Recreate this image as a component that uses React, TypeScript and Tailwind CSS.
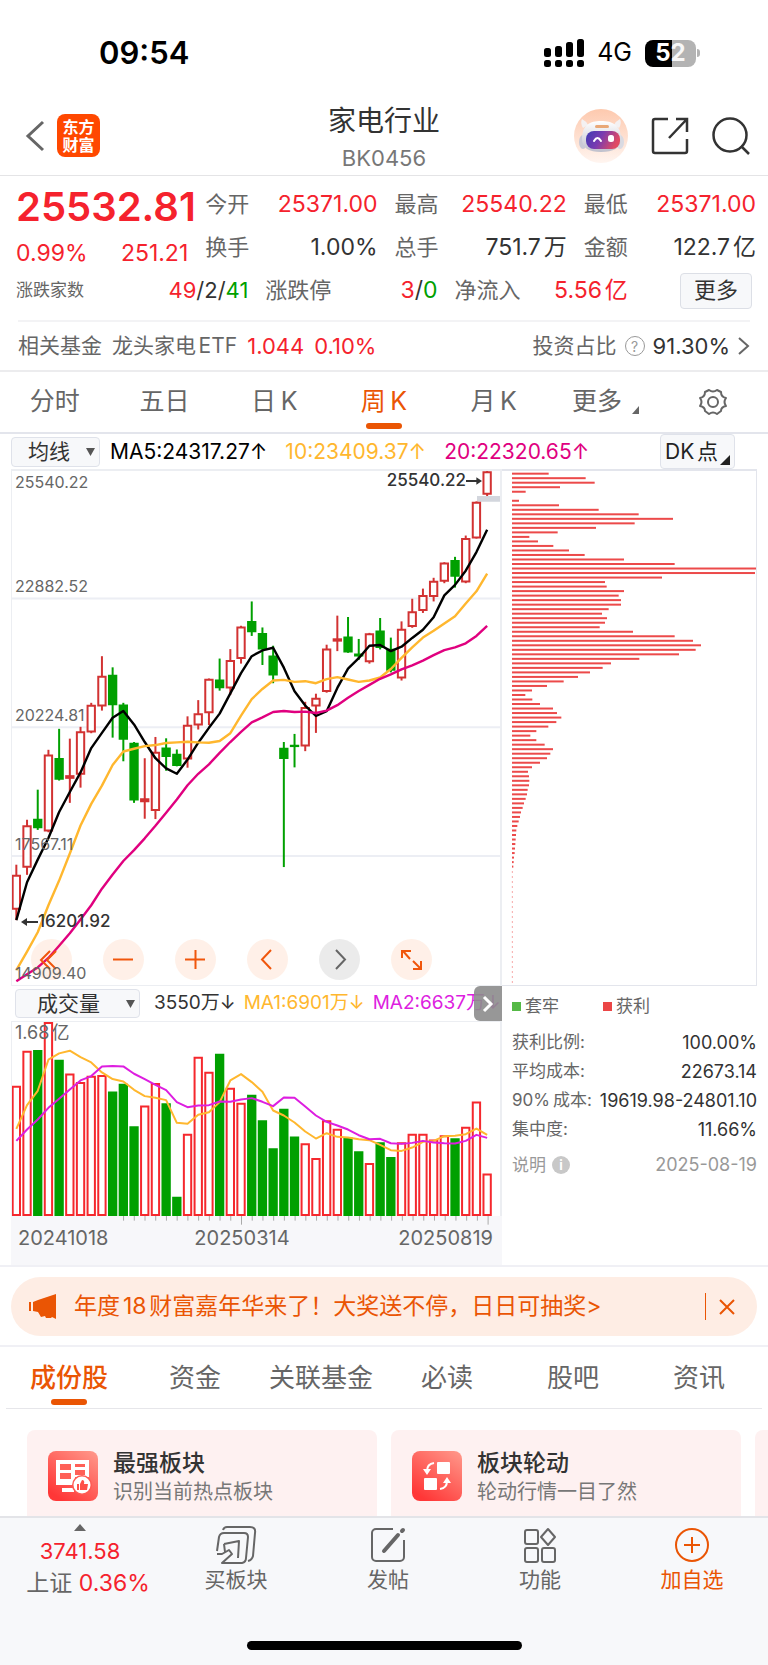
import React from 'react'

const RED = '#d23232'
const GREEN = '#00a000'

// [high, body top, body bottom, low, rising]
const candles: number[][] = [
  [1183, 1214, 1315, 1347, 1], [1050, 1067, 1191, 1213, 1], [961, 1048, 1074, 1080, 0],
  [843, 858, 1084, 1087, 1], [781, 868, 931, 934, 0], [810, 919, 928, 1000, 1],
  [775, 789, 916, 955, 1], [704, 711, 791, 794, 1], [566, 625, 714, 727, 1],
  [599, 622, 710, 807, 0], [704, 710, 812, 877, 0], [820, 823, 992, 1000, 0],
  [868, 987, 997, 1047, 1], [805, 850, 1023, 1048, 1], [809, 837, 863, 905, 0],
  [842, 856, 890, 892, 0], [744, 770, 871, 896, 1], [696, 736, 770, 783, 1],
  [632, 634, 734, 770, 1], [573, 636, 660, 668, 0], [545, 578, 661, 681, 1],
  [476, 479, 573, 588, 1], [404, 463, 494, 506, 0], [481, 498, 545, 592, 0],
  [535, 565, 622, 646, 0], [820, 838, 869, 1190, 0], [796, 829, 833, 895, 0],
  [701, 717, 832, 847, 1], [677, 690, 714, 793, 1], [532, 544, 671, 674, 1],
  [446, 514, 522, 551, 1], [450, 509, 554, 556, 0], [515, 559, 566, 577, 0],
  [497, 499, 583, 588, 1], [453, 491, 541, 546, 0], [511, 545, 608, 614, 0],
  [463, 486, 631, 638, 1], [396, 434, 479, 482, 1], [366, 386, 431, 438, 1],
  [334, 344, 390, 404, 1], [288, 290, 345, 350, 1], [272, 282, 330, 363, 0],
  [209, 217, 347, 350, 1], [108, 110, 217, 218, 1], [18, 20, 87, 92, 1],
]

const ma5 = [1347, 1235, 1168, 1104, 1027, 968, 910, 838, 793, 748, 728, 768, 820, 868, 898, 914, 872, 822, 778, 736, 676, 616, 566, 549, 541, 600, 670, 712, 743, 729, 660, 603, 572, 535, 533, 551, 538, 512, 488, 451, 386, 355, 313, 258, 192]
const ma10 = [1495, 1440, 1383, 1303, 1230, 1150, 1067, 1003, 949, 888, 848, 840, 832, 829, 823, 821, 819, 821, 822, 817, 794, 742, 693, 663, 638, 636, 642, 640, 646, 634, 628, 635, 642, 638, 629, 604, 571, 540, 511, 491, 469, 448, 410, 374, 322]
const ma20 = [1528, 1507, 1487, 1459, 1423, 1386, 1345, 1303, 1254, 1212, 1172, 1140, 1105, 1068, 1029, 990, 948, 914, 886, 852, 820, 790, 762, 747, 731, 728, 731, 730, 734, 727, 711, 689, 669, 651, 633, 620, 605, 593, 579, 563, 548, 540, 528, 506, 476]

const volumes = [318, 213, 211, 127, 240, 281, 307, 288, 286, 335, 312, 439, 377, 310, 370, 650, 462, 231, 276, 222, 324, 369, 345, 421, 505, 387, 470, 490, 534, 421, 447, 473, 514, 549, 487, 531, 487, 462, 462, 479, 466, 475, 441, 365, 581]
const vol1 = [447, 376, 333, 240, 221, 213, 232, 248, 278, 298, 305, 330, 349, 354, 361, 429, 432, 405, 397, 367, 302, 283, 307, 336, 392, 407, 428, 455, 476, 460, 471, 473, 478, 481, 495, 511, 513, 503, 486, 483, 469, 468, 463, 446, 465]
const vol2 = [483, 449, 419, 384, 357, 329, 302, 289, 260, 259, 260, 282, 298, 315, 331, 367, 382, 377, 376, 365, 366, 359, 355, 366, 379, 353, 354, 380, 407, 426, 437, 449, 466, 478, 477, 490, 492, 489, 483, 488, 490, 491, 483, 465, 474]

const chips = [110, 221, 248, 144, 41, 0, 21, 141, 260, 380, 483, 368, 252, 137, 52, 78, 124, 171, 218, 336, 488, 734, 729, 450, 279, 284, 336, 320, 327, 327, 290, 270, 285, 279, 263, 363, 488, 543, 567, 551, 501, 382, 297, 272, 234, 198, 155, 105, 60, 40, 61, 84, 123, 135, 148, 133, 109, 73, 55, 73, 98, 123, 115, 105, 84, 60, 48, 51, 52, 51, 47, 45, 41, 36, 32, 27, 24, 20, 16, 13, 12, 11, 10, 9, 8, 6, 5, 4]

const cx = (i: number) => 49 + i * 32.1
const line = (ys: number[]) => ys.map((y, i) => `${cx(i)},${y}`).join(' ')

function Line({ ys, color, width = 2 }: { ys: number[]; color: string; width?: number }) {
  return <polyline points={line(ys)} fill="none" stroke={color} strokeWidth={width} strokeLinejoin="round" vectorEffect="non-scaling-stroke" />
}

function StatusBar() {
  return (
    <div className="flex h-24 items-center justify-between pt-[10px] pr-[68px] pl-[99px] text-black">
      <span className="text-[31px] font-semibold">09:54</span>
      <div className="flex items-center gap-[13px]">
        <svg width="40" height="28" viewBox="0 0 40 28">
          <rect x="0" y="9" width="7" height="9" rx="2.5" />
          <rect x="11" y="7" width="7" height="11" rx="2.5" />
          <rect x="22" y="3" width="7" height="15" rx="2.5" />
          <rect x="33" y="0" width="7" height="18" rx="2.5" />
          <rect x="0" y="21" width="7" height="7" rx="2.5" />
          <rect x="11" y="21" width="7" height="7" rx="2.5" />
          <rect x="22" y="21" width="7" height="7" rx="2.5" />
          <rect x="33" y="21" width="7" height="7" rx="2.5" />
        </svg>
        <span className="text-[25px]">4G</span>
        <div className="flex items-center gap-px">
          <div className="flex h-[27px] w-[51px] items-center justify-center rounded-lg bg-[linear-gradient(90deg,#000_52%,#b3b3b3_52%)] text-[24px] font-bold text-white">
            <span>5</span>
            <span className="text-white/90">2</span>
          </div>
          <div className="h-2 w-[3px] rounded-r-full bg-[#b3b3b3]" />
        </div>
      </div>
    </div>
  )
}

function Robot() {
  return (
    <svg width="54" height="54" viewBox="0 0 54 54">
      <defs>
        <linearGradient id="halo" x1="0" y1="0" x2="0" y2="1">
          <stop offset="0" stopColor="#fdc9ae" />
          <stop offset="1" stopColor="#fff5f0" />
        </linearGradient>
        <linearGradient id="visor" x1="0" y1="0" x2="1" y2="0.3">
          <stop offset="0" stopColor="#3e3bb4" />
          <stop offset="0.5" stopColor="#7a3bb0" />
          <stop offset="1" stopColor="#e04a63" />
        </linearGradient>
        <linearGradient id="shell" x1="0" y1="0" x2="0" y2="1">
          <stop offset="0" stopColor="#ffffff" />
          <stop offset="1" stopColor="#bfc0cc" />
        </linearGradient>
      </defs>
      <circle cx="27" cy="27" r="27" fill="url(#halo)" />
      <ellipse cx="9" cy="33" rx="4" ry="7" fill="#c9cad6" />
      <ellipse cx="46" cy="33" rx="4" ry="7" fill="#d9dae2" />
      <path d="M8 10q4 2 6 6l-5 3q-3-5-1-9zM46 10q-4 2-6 6l5 3q3-5 1-9z" fill="#f4f1f2" />
      <path d="M8 30C8 16 16 12 27 12s20 4 20 18c0 9-8 13-20 13S8 39 8 30z" fill="url(#shell)" />
      <rect x="21" y="16" width="14" height="3" rx="1.5" fill="#e9a877" />
      <rect x="12" y="22" width="34" height="18" rx="8" fill="url(#visor)" />
      <path d="M20 32q3.500-6 7 0" fill="none" stroke="#fff" strokeWidth="2" strokeLinecap="round" />
      <rect x="34" y="26" width="6" height="7" rx="2.500" fill="#fff" />
    </svg>
  )
}

function Header() {
  return (
    <header className="grid h-20 grid-cols-[1fr_auto_1fr] items-center border-b border-[#e4e4e6] px-[18px]">
      <div className="flex items-center gap-3 pl-[7px]">
        <button aria-label="返回">
          <svg width="20" height="32" viewBox="0 0 20 32" fill="none" stroke="#666" strokeWidth="3">
            <path d="M18 2 3 16l15 14" />
          </svg>
        </button>
        <a href="#home" className="flex h-[43px] w-[43px] flex-col items-center justify-center rounded-lg bg-[#ff4800] text-[16px] leading-[18px] font-bold text-white">
          <span>东方</span>
          <span>财富</span>
        </a>
      </div>
      <div className="flex flex-col items-center gap-1 pt-[6px]">
        <h1 className="text-[28px] leading-[34px] text-[#333]">家电行业</h1>
        <span className="text-[22px] leading-8 text-[#777]">BK0456</span>
      </div>
      <div className="flex items-center justify-end gap-[23px]">
        <button aria-label="助手"><Robot /></button>
        <button aria-label="分享">
          <svg width="38" height="38" viewBox="0 0 38 38" fill="none" stroke="#333" strokeWidth="2.500">
            <path d="M17 2H4a2 2 0 0 0-2 2v30a2 2 0 0 0 2 2h30a2 2 0 0 0 2-2V22M25 2h11v13M36 2 18 21" />
          </svg>
        </button>
        <button aria-label="搜索">
          <svg width="38" height="38" viewBox="0 0 38 38" fill="none" stroke="#333" strokeWidth="2.500">
            <circle cx="18" cy="18" r="16.500" />
            <path d="m29 29 8 8" />
          </svg>
        </button>
      </div>
    </header>
  )
}

function Stat({ label, value, red }: { label: string; value: React.ReactNode; red?: boolean }) {
  return (
    <div className="flex items-center justify-between whitespace-nowrap">
      <span className="text-[#666]">{label}</span>
      <span className={red ? 'text-[23px] text-[#f5222d]' : 'text-[23px] text-[#333]'}>{value}</span>
    </div>
  )
}

function Quote() {
  return (
    <section className="border-b-2 border-[#ececee] pt-[7px] text-[22px]">
      <div className="grid grid-cols-4 grid-rows-[43px_43px] gap-x-[17px] pr-3 pl-4">
        <div className="row-span-2 text-[#f5222d]">
          <div className="text-[40px] leading-[48px] font-semibold whitespace-nowrap">25532.81</div>
          <div className="flex justify-between text-[23px] leading-[44px]">
            <span>0.99%</span>
            <span>251.21</span>
          </div>
        </div>
        <Stat label="今开" value="25371.00" red />
        <Stat label="最高" value="25540.22" red />
        <Stat label="最低" value="25371.00" red />
        <Stat label="换手" value="1.00%" />
        <Stat label="总手" value="751.7万" />
        <Stat label="金额" value="122.7亿" />
      </div>
      <div className="grid h-[43px] grid-cols-[232fr_172fr_173fr_111fr] items-center gap-x-[17px] pr-3 pl-4">
        <div className="flex items-center justify-between">
          <span className="text-[17px] text-[#666]">涨跌家数</span>
          <span className="text-[#333]">
            <span className="text-[#f5222d]">49</span>/2/<span className="text-[#00a000]">41</span>
          </span>
        </div>
        <Stat label="涨跌停" value={<><span className="text-[#f5222d]">3</span>/<span className="text-[#00a000]">0</span></>} />
        <Stat label="净流入" value="5.56亿" red />
        <button className="mr-1 h-9 w-[72px] justify-self-end rounded border border-[#dcdfe6] bg-[#f7f8fa] text-[#333]">更多</button>
      </div>
      <div className="mx-[18px] mt-2 flex h-[50px] items-center justify-between border-t-2 border-[#f3f3f5] text-[21px] text-[#666]">
        <a href="#etf" className="flex items-center gap-[10px]">
          <span>相关基金</span>
          <span>龙头家电ETF</span>
          <span className="text-[22px] text-[#f5222d]">1.044</span>
          <span className="text-[22px] text-[#f5222d]">0.10%</span>
        </a>
        <a href="#ratio" className="flex items-center gap-2">
          <span>投资占比</span>
          <span className="flex h-5 w-5 items-center justify-center rounded-full border border-[#999] text-[14px] text-[#999]">?</span>
          <span className="text-[22px] text-[#333]">91.30%</span>
          <svg width="12" height="20" viewBox="0 0 12 20" fill="none" stroke="#666" strokeWidth="2">
            <path d="m1 2 9 8-9 8" />
          </svg>
        </a>
      </div>
    </section>
  )
}

function PeriodTabs() {
  const tabs = ['分时', '五日', '日K', '周K', '月K']
  return (
    <nav className="grid h-[62px] grid-cols-7 border-b-2 border-[#e3e5ec] text-[25px] text-[#666]">
      {tabs.map((t) => (
        <button key={t} className={t === '周K' ? 'relative text-[#ea5504]' : 'relative'}>
          {t.replace('K', '\u2009K')}
          {t === '周K' && <span className="absolute bottom-[3px] left-1/2 h-[6px] w-9 -translate-x-1/2 rounded-full bg-[#ea5504]" />}
        </button>
      ))}
      <button className="flex items-center justify-center gap-[10px] pl-1">
        更多
        <svg width="7" height="8" viewBox="0 0 7 8" fill="#666" className="mt-4"><path d="M7 0v8H0z" /></svg>
      </button>
      <button aria-label="设置" className="flex items-center justify-center">
        <svg width="30" height="28" viewBox="0 0 30 28" fill="none" stroke="#666" strokeWidth="2">
          <path d="M11 2q4 3 8 0l4 2q0 5 5 6q-3 4 0 8q-5 1-5 5l-4 3q-4-3-8 0l-4-3q0-4-5-5q3-4 0-8q5-1 5-6z" strokeLinejoin="round" />
          <circle cx="15" cy="14" r="5" />
        </svg>
      </button>
    </nav>
  )
}

function Toolbar() {
  return (
    <div className="flex h-[35px] items-center justify-between pr-[33px] pl-[11px] text-[21px] whitespace-nowrap">
      <div className="flex items-center">
        <button className="flex h-[30px] w-[89px] items-center justify-end gap-4 rounded border border-[#dfe2ea] bg-[#f7f8fa] pr-1 text-[#333]">
          均线
          <svg width="9" height="8" viewBox="0 0 9 8" fill="#555"><path d="M0 0h9L4.500 8z" /></svg>
        </button>
        <span className="ml-[10px] text-black">MA5:24317.27↑</span>
        <span className="ml-[18px] text-[#ffb72e]">10:23409.37↑</span>
        <span className="ml-[18px] text-[#e0007f]">20:22320.65↑</span>
      </div>
      <button className="relative flex h-[35px] w-[75px] items-center rounded border border-[#dfe2ea] bg-[#f7f8fa] pl-1 text-[#222]">
        DK点
        <svg width="10" height="10" viewBox="0 0 10 10" fill="#222" className="absolute right-1 bottom-[3px]"><path d="M10 0v10H0z" /></svg>
      </button>
    </div>
  )
}

const zoomButtons = [
  ['最早', 'M19 12l-9 9 9 9M25 12l-9 9 9 9'],
  ['缩小', 'M10 20.500h20'],
  ['放大', 'M10 20.500h20M20.500 11v19'],
  ['左移', 'M24 11l-9 9.500 9 9.500'],
  ['右移', 'M17 11l9 9.500-9 9.500'],
  ['全屏', 'M11 19v-7h9M12 12l7 8M22 30h8v-8M30 30l-8-8'],
]

function KLine() {
  return (
    <div className="relative h-[517px] border-t-2 border-r-2 border-b border-l border-[#eceef2] text-[16px] text-[#666]">
      <svg className="absolute inset-0 h-full w-full" viewBox="36 18 1464 1521" preserveAspectRatio="none">
        {[395, 776, 1157].map((y) => (
          <path key={y} d={`M33 ${y}H1503`} stroke="#eceef4" strokeWidth="2" vectorEffect="non-scaling-stroke" />
        ))}
        <rect x="1431" y="92" width="72" height="17" fill="#d3d6dd" />
        {candles.map(([hi, top, bot, lo, up], i) => (
          <g key={i} stroke={up ? RED : GREEN} fill={up ? '#fff' : GREEN}>
            <path d={`M${cx(i)} ${hi}V${lo}`} strokeWidth="2" vectorEffect="non-scaling-stroke" />
            <rect x={cx(i) - 11} y={top + 2} width="22" height={Math.max(bot - top - 4, 1)} strokeWidth="2" vectorEffect="non-scaling-stroke" />
          </g>
        ))}
        <Line ys={ma5} color="#000" width={2.4} />
        <Line ys={ma10} color="#ffb72e" width={2.4} />
        <Line ys={ma20} color="#e0007f" width={2.4} />
      </svg>
      <div className="absolute bottom-[5px] left-[19px] flex gap-[31px]">
        {zoomButtons.map(([label, d]) => (
          <button
            key={label}
            aria-label={label}
            className={label === '右移' ? 'rounded-full bg-black/8 text-[#666]' : 'rounded-full bg-[#ff5a00]/9 text-[#f0560c]'}
          >
            <svg width="41" height="41" viewBox="0 0 41 41" fill="none" stroke="currentColor" strokeWidth="2"><path d={d} /></svg>
          </button>
        ))}
      </div>
      <span className="absolute top-[-1px] left-[3px]">25540.22</span>
      <span className="absolute top-[103px] left-[3px]">22882.52</span>
      <span className="absolute top-[232px] left-[3px]">20224.81</span>
      <span className="absolute top-[361px] left-[3px]">17567.11</span>
      <span className="absolute bottom-0 left-[3px]">14909.40</span>
      <span className="absolute top-[438px] left-[9px] flex items-center text-[17px] font-medium text-[#333]">
        <svg width="17" height="8" viewBox="0 0 17 8" fill="#333"><path d="M0 4l6-4v3h11v2H6v3z" /></svg>
        16201.92
      </span>
      <span className="absolute top-[-3px] right-[18px] flex items-center text-[17px] font-medium text-[#333]">
        25540.22
        <svg width="16" height="8" viewBox="0 0 17 8" fill="#333"><path d="M17 4l-6-4v3H0v2h11v3z" /></svg>
      </span>
    </div>
  )
}

function VolumeBar() {
  return (
    <div className="relative flex h-[35px] items-center overflow-hidden pl-1 text-[19px] whitespace-nowrap [text-autospace:no-autospace]">
      <button className="flex h-[29px] w-[125px] shrink-0 items-center justify-end gap-[26px] rounded border border-[#dfe2ea] bg-[#f7f8fa] pr-1 text-[21px] text-[#333]">
        成交量
        <svg width="9" height="8" viewBox="0 0 9 8" fill="#555"><path d="M0 0h9L4.500 8z" /></svg>
      </button>
      <span className="ml-[14px] text-[#333]">3550万↓</span>
      <span className="ml-2 text-[#ffb72e]">MA1:6901万↓</span>
      <span className="ml-2 text-[#dd1ee0]">MA2:6637万↓</span>
      <button aria-label="展开" className="absolute top-0 right-0 flex h-full w-7 items-center justify-center rounded-l-md bg-[#8c8c8c]/90">
        <svg width="12" height="18" viewBox="0 0 12 18" fill="none" stroke="#fff" strokeWidth="3"><path d="m2 2 7 7-7 7" /></svg>
      </button>
    </div>
  )
}

function Volume() {
  return (
    <div>
      <div className="relative h-[195px] border-t border-r-2 border-l border-[#eceef2]">
        <svg className="absolute inset-0 h-full w-full" viewBox="36 127 1464 581" preserveAspectRatio="none">
          {volumes.map((top, i) => (
            <rect
              key={i}
              x={cx(i) - 11}
              y={top + 3}
              width="22"
              height={702 - top}
              fill={candles[i][4] ? '#fff' : GREEN}
              stroke={candles[i][4] ? '#f5282d' : GREEN}
              strokeWidth="2"
              vectorEffect="non-scaling-stroke"
            />
          ))}
          <Line ys={vol1} color="#ffb72e" />
          <Line ys={vol2} color="#dd1ee0" />
        </svg>
        <span className="absolute top-0 left-[3px] text-[18px] leading-[22px] text-[#666]">1.68亿</span>
      </div>
      <div className="h-[49px] bg-[#f7f7fa] text-[20px] text-[#666]">
        <svg className="block h-[9px] w-full" viewBox="33 0 1470 27" preserveAspectRatio="none">
          {volumes.map((_, i) => i > 9 && (
            <path key={i} d={`M${cx(i)} 0V${i === 21 || i === 44 ? 26 : 14}`} stroke="#aaa" strokeWidth="1" vectorEffect="non-scaling-stroke" />
          ))}
        </svg>
        <div className="grid grid-cols-[176fr_100fr_198fr] pr-[9px] pl-[7px] leading-[26px]">
          <span>20241018</span>
          <span>20250314</span>
          <span className="text-right">20250819</span>
        </div>
      </div>
    </div>
  )
}

function CostChart() {
  return (
    <svg className="block h-[517px] w-full border-t-2 border-r border-b border-[#e3e5ec]" viewBox="6 18 762 1542" preserveAspectRatio="none">
      {chips.map((w, i) => (
        <rect key={i} x="36" y={23 + i * 13.55} width={w} height="6" fill="#ec4a4a" />
      ))}
      <path d="M37 1218V1560" stroke="#f7a9a9" strokeWidth="1" strokeDasharray="2 3" vectorEffect="non-scaling-stroke" />
    </svg>
  )
}

function CostInfo() {
  const rows = [
    ['获利比例:', '100.00%'],
    ['平均成本:', '22673.14'],
    ['90%\u2009成本:', '19619.98-24801.10'],
    ['集中度:', '11.66%'],
  ]
  return (
    <div className="pt-[7px] pl-[10px] text-[17px] text-[#666] [text-autospace:no-autospace]">
      <div className="flex gap-11 leading-[26px]">
        <span className="flex items-center gap-1"><i className="h-[9px] w-[9px] bg-[#55b946]" />套牢</span>
        <span className="flex items-center gap-1"><i className="h-[9px] w-[9px] bg-[#eb4646]" />获利</span>
      </div>
      <dl className="mt-[9px]">
        {rows.map(([k, v]) => (
          <div key={k} className="flex justify-between leading-[29px] whitespace-nowrap">
            <dt>{k}</dt>
            <dd className="text-[18px] text-[#333]">{v}</dd>
          </div>
        ))}
      </dl>
      <div className="mt-[6px] flex items-center justify-between text-[18px] leading-[30px] text-[#999]">
        <span className="flex items-center gap-[6px] text-[17px]">
          说明
          <span className="flex h-[18px] w-[18px] items-center justify-center rounded-full bg-[#c8c8c8] text-[13px] font-bold text-white">i</span>
        </span>
        <span>2025-08-19</span>
      </div>
    </div>
  )
}

function Banner() {
  return (
    <div className="border-y-2 border-[#f0f0f5] px-[11px] pt-[10px] pb-[9px]">
      <div className="flex h-[59px] items-center rounded-full bg-[#feede4] pr-[22px] pl-[18px] text-[#ea5504]">
        <svg width="27" height="25" viewBox="0 0 27 25" fill="currentColor">
          <path d="M0 8h2v9H0zM4 8l5-2L27 0v25l-4-2-1 1h-5l-1-2-4 1-3-5-5-1z" />
        </svg>
        <a href="#carnival" className="ml-[18px] flex-1 text-[23px] whitespace-nowrap">年度18财富嘉年华来了！大奖送不停，日日可抽奖&gt;</a>
        <span className="h-[27px] w-px bg-[#ea5504]" />
        <button aria-label="关闭" className="ml-[13px]">
          <svg width="16" height="16" viewBox="0 0 16 16" fill="none" stroke="currentColor" strokeWidth="2"><path d="m1 1 14 14M15 1 1 15" /></svg>
        </button>
      </div>
    </div>
  )
}

function SectionTabs() {
  const tabs = ['成份股', '资金', '关联基金', '必读', '股吧', '资讯']
  return (
    <nav className="mx-[6px] grid h-[62px] grid-cols-6 border-b border-[#e6e6ea] text-[26px] text-[#666]">
      {tabs.map((t, i) => (
        <button key={t} className={i === 0 ? 'relative font-medium text-[#ea5504]' : 'relative'}>
          {t}
          {i === 0 && <span className="absolute bottom-[3px] left-1/2 h-[6px] w-9 -translate-x-1/2 rounded-full bg-[#ea5504]" />}
        </button>
      ))}
    </nav>
  )
}

function CardIcon({ children }: { children: React.ReactNode }) {
  return (
    <svg width="50" height="50" viewBox="0 0 50 50" className="shrink-0">
      <defs>
        <linearGradient id="tile" x1="1" y1="0" x2="0.300" y2="1">
          <stop offset="0" stopColor="#ff9a8c" />
          <stop offset="1" stopColor="#ff3737" />
        </linearGradient>
      </defs>
      <rect width="50" height="50" rx="8" fill="url(#tile)" />
      {children}
    </svg>
  )
}

function Cards() {
  const card = 'flex h-[100px] w-[350px] shrink-0 items-start gap-[15px] rounded-lg bg-[#fef1f1] pt-[21px] pl-[21px]'
  return (
    <div className="mt-[21px] flex h-[86px] gap-[14px] overflow-hidden pl-[27px]">
      <a href="#strongest" className={card}>
        <CardIcon>
          <path d="M8 9h33v17H27v8H8z" fill="#fff" />
          <path d="M12 13h11v6H12zM27 13h10v3H27zM12 22h11v6H12zM27 19h10v5H27z" fill="#ff6057" />
          <path d="M14 37h12v4H14z" fill="#fff" />
          <circle cx="34" cy="34" r="10" fill="#ff5a52" />
          <circle cx="34" cy="34" r="8.500" fill="#fff" />
          <path d="M29 33h2v6h-2zM32 33l2-4q3 0 2 4h4l-1 6h-7z" fill="#ff5048" />
        </CardIcon>
        <span className="-mt-[5px]">
          <b className="block text-[23px] leading-[34px] font-medium text-[#333]">最强板块</b>
          <span className="block text-[20px] leading-6 text-[#777]">识别当前热点板块</span>
        </span>
      </a>
      <a href="#rotation" className={card}>
        <CardIcon>
          <rect x="25" y="11" width="13" height="12" rx="1" fill="#fff" />
          <rect x="12" y="27" width="13" height="12" rx="1" fill="#fff" />
          <path d="M22 12q-7 1-7 8M28 38q7-1 7-8" fill="none" stroke="#fff" strokeWidth="2" />
          <path d="M11 18h8l-4 6zM31 32h8l-4-6z" fill="#fff" />
        </CardIcon>
        <span className="-mt-[5px]">
          <b className="block text-[23px] leading-[34px] font-medium text-[#333]">板块轮动</b>
          <span className="block text-[20px] leading-6 text-[#777]">轮动行情一目了然</span>
        </span>
      </a>
      <div className={card} />
    </div>
  )
}

function BottomNav() {
  const item = 'flex flex-1 flex-col items-center pt-[8px]'
  return (
    <footer className="flex flex-1 flex-col justify-between border-t-2 border-[#e3e4e8] bg-[#f7f8fa] pb-[15px] text-[21px] text-[#666]">
      <nav className="flex">
        <button className="flex w-40 flex-col items-center pt-[6px] pl-4 leading-8 whitespace-nowrap">
          <svg width="12" height="7" viewBox="0 0 12 7" fill="#666" className="mr-4 mb-1"><path d="M6 0l6 7H0z" /></svg>
          <span className="mr-4 text-[22px] text-[#f5222d]">3741.58</span>
          <span className="text-[23px]">上证 <span className="text-[#f5222d]">0.36%</span></span>
        </button>
        <button className={item}>
          <svg width="42" height="38" viewBox="0 0 42 38" fill="none" stroke="#666" strokeWidth="2" strokeLinejoin="round">
            <path d="M8 4q1-3 4-3h23q6 0 5 6l-2 23q-1 4-5 5" />
            <path d="M2 25 4 11q1-4 5-4h20q4 0 4 4l-2 21q0 4-4 5H7l10-9-3-4-7 4H2" />
            <path d="m9 18 15-3-1 17M9 18l1 8" />
          </svg>
          买板块
        </button>
        <button className={item}>
          <svg width="36" height="38" viewBox="0 0 36 38" fill="none" stroke="#666" strokeWidth="2">
            <path d="M23 3H6a4 4 0 0 0-4 4v24a4 4 0 0 0 4 4h24a4 4 0 0 0 4-4V14" />
            <path d="M14 25l14-16M32 5l1-1" strokeWidth="4" strokeLinecap="round" />
          </svg>
          发帖
        </button>
        <button className={item}>
          <svg width="34" height="38" viewBox="0 0 34 38" fill="none" stroke="#666" strokeWidth="2">
            <rect x="2" y="4" width="13" height="14" rx="2" />
            <path d="M25 3l7 8-7 8-7-8z" strokeLinejoin="round" />
            <rect x="2" y="22" width="13" height="14" rx="2" />
            <rect x="19" y="22" width="13" height="14" rx="2" />
          </svg>
          功能
        </button>
        <button className={`${item} text-[#ea5504]`}>
          <svg width="36" height="38" viewBox="0 0 36 38" fill="none" stroke="currentColor" strokeWidth="2">
            <circle cx="18" cy="19" r="16" />
            <path d="M10 19h16M18 11v16" />
          </svg>
          加自选
        </button>
      </nav>
      <div className="mx-auto h-[9px] w-[275px] rounded-full bg-black" />
    </footer>
  )
}

export default function App() {
  return (
    <div lang="zh-CN" className="flex min-h-screen flex-col bg-white font-[Inter,'Noto_Sans_CJK_SC',sans-serif] [text-autospace:normal]">
      <StatusBar />
      <Header />
      <Quote />
      <PeriodTabs />
      <Toolbar />
      <main className="grid grid-cols-[minmax(0,491fr)_minmax(0,255fr)] px-[11px]">
        <div>
          <KLine />
          <VolumeBar />
          <Volume />
        </div>
        <div>
          <CostChart />
          <CostInfo />
        </div>
      </main>
      <Banner />
      <SectionTabs />
      <Cards />
      <BottomNav />
    </div>
  )
}
